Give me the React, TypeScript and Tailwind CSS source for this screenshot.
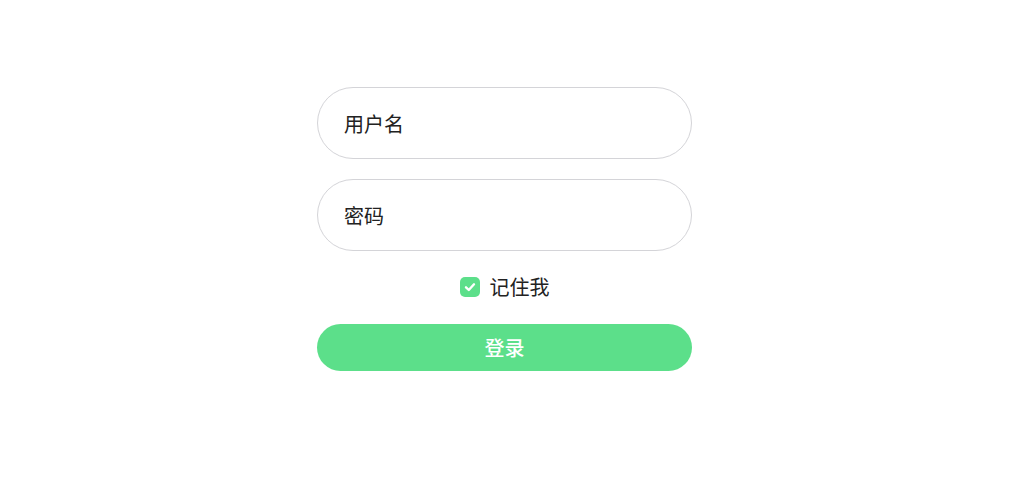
import { useState } from 'react';

// Simple login form: two pill inputs, a remember-me checkbox and a submit button.

export default function App() {
  const [remember, setRemember] = useState(true);

  return (
    <div
      className="flex min-h-[503px] w-full justify-center bg-white pt-[87px]"
      style={{ fontFamily: '"Noto Sans CJK SC", "Noto Sans", sans-serif' }}
    >
      <form className="flex w-[375px] flex-col" onSubmit={(e) => e.preventDefault()}>
        <input
          type="text"
          placeholder="用户名"
          className="h-[72px] w-full rounded-full border border-[#d4d4d8] bg-white px-[26px] text-[20px] text-[#222] outline-none placeholder:text-[#222]"
        />
        <input
          type="password"
          placeholder="密码"
          className="mt-[20px] h-[72px] w-full rounded-full border border-[#d4d4d8] bg-white px-[26px] text-[20px] text-[#222] outline-none placeholder:text-[#222]"
        />

        <label className="mt-[26px] flex h-[20px] cursor-pointer items-center justify-center gap-[10px] text-[20px] text-[#222]">
          <span
            onClick={() => setRemember((r) => !r)}
            className={
              remember
                ? 'flex h-[20px] w-[20px] items-center justify-center rounded-[5px] bg-[#5cdf8a]'
                : 'flex h-[20px] w-[20px] items-center justify-center rounded-[5px] border border-[#ccc] bg-white'
            }
          >
            {remember && (
              <svg width="14" height="14" viewBox="0 0 14 14" fill="none">
                <path
                  d="M3 7.3 L5.8 10 L11 4.3"
                  stroke="white"
                  strokeWidth="2.4"
                  strokeLinecap="round"
                  strokeLinejoin="round"
                />
              </svg>
            )}
          </span>
          <span className="leading-none">记住我</span>
        </label>

        <button
          type="submit"
          className="mt-[27px] h-[47px] w-full rounded-full bg-[#5cdf8a] text-[20px] font-medium text-white"
        >
          登录
        </button>
      </form>
    </div>
  );
}
